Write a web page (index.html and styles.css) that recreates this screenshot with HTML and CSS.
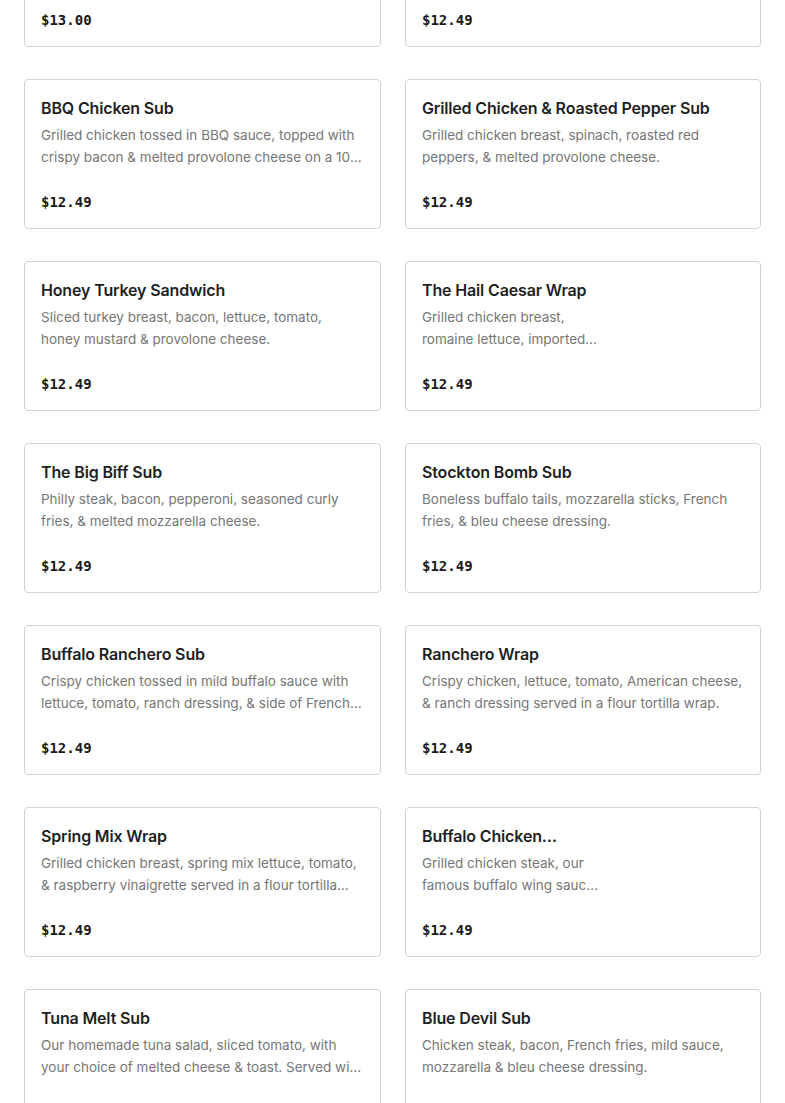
FILE: index.html
```html
<!DOCTYPE html>
<html lang="en">
<head>
<meta charset="utf-8">
<title>Menu</title>
<link rel="stylesheet" href="styles.css">
</head>
<body>
<main class="menu">
  <div class="card"><h3 class="title">Chicken Cheesesteak Sub</h3><p class="desc">Chicken steak, fried onions, lettuce, tomato, mayo &amp; melted American cheese.</p><div class="price">$13.00</div></div>
  <div class="card"><h3 class="title">Cheesesteak Sub</h3><p class="desc">Philly steak, fried onions, lettuce, tomato, mayo &amp; melted American cheese.</p><div class="price">$12.49</div></div>

  <div class="card"><h3 class="title">BBQ Chicken Sub</h3><p class="desc">Grilled chicken tossed in BBQ sauce, topped with crispy bacon &amp; melted provolone cheese on a 10&quot; roll.</p><div class="price">$12.49</div></div>
  <div class="card"><h3 class="title">Grilled Chicken &amp; Roasted Pepper Sub</h3><p class="desc">Grilled chicken breast, spinach, roasted red peppers, &amp; melted provolone cheese.</p><div class="price">$12.49</div></div>

  <div class="card"><h3 class="title">Honey Turkey Sandwich</h3><p class="desc">Sliced turkey breast, bacon, lettuce, tomato, honey mustard &amp; provolone cheese.</p><div class="price">$12.49</div></div>
  <div class="card narrow"><h3 class="title">The Hail Caesar Wrap</h3><p class="desc">Grilled chicken breast, romaine lettuce, imported Parmesan cheese &amp; Caesar dressing.</p><div class="price">$12.49</div></div>

  <div class="card"><h3 class="title">The Big Biff Sub</h3><p class="desc">Philly steak, bacon, pepperoni, seasoned curly fries, &amp; melted mozzarella cheese.</p><div class="price">$12.49</div></div>
  <div class="card"><h3 class="title">Stockton Bomb Sub</h3><p class="desc">Boneless buffalo tails, mozzarella sticks, French fries, &amp; bleu cheese dressing.</p><div class="price">$12.49</div></div>

  <div class="card"><h3 class="title">Buffalo Ranchero Sub</h3><p class="desc">Crispy chicken tossed in mild buffalo sauce with lettuce, tomato, ranch dressing, &amp; side of French fries.</p><div class="price">$12.49</div></div>
  <div class="card"><h3 class="title">Ranchero Wrap</h3><p class="desc">Crispy chicken, lettuce, tomato, American cheese, &amp; ranch dressing served in a flour tortilla wrap.</p><div class="price">$12.49</div></div>

  <div class="card"><h3 class="title">Spring Mix Wrap</h3><p class="desc">Grilled chicken breast, spring mix lettuce, tomato, &amp; raspberry vinaigrette served in a flour tortilla wrap.</p><div class="price">$12.49</div></div>
  <div class="card narrow"><h3 class="title">Buffalo Chicken Cheesesteak</h3><p class="desc">Grilled chicken steak, our famous buffalo wing sauce, &amp; melted provolone.</p><div class="price">$12.49</div></div>

  <div class="card"><h3 class="title">Tuna Melt Sub</h3><p class="desc">Our homemade tuna salad, sliced tomato, with your choice of melted cheese &amp; toast. Served with chips.</p><div class="price">$12.49</div></div>
  <div class="card"><h3 class="title">Blue Devil Sub</h3><p class="desc">Chicken steak, bacon, French fries, mild sauce, mozzarella &amp; bleu cheese dressing.</p><div class="price">$12.49</div></div>
</main>
</body>
</html>
```
FILE: styles.css
```css
html, body {
  margin: 0;
  padding: 0;
  background: #ffffff;
  overflow: hidden;
}
body {
  font-family: Inter, "Noto Sans", "Liberation Sans", sans-serif;
  color: #191919;
}
.menu {
  display: grid;
  grid-template-columns: 357px 356px;
  column-gap: 24px;
  row-gap: 32px;
  padding: 0 24px;
  margin-top: -103px;
}
.card {
  border: 1px solid #d3d3d3;
  border-radius: 4px;
  padding: 16px 16px 14px;
  height: 150px;
  box-sizing: border-box;
  display: flex;
  flex-direction: column;
}
.title {
  margin: 0;
  font-size: 16px;
  font-weight: 600;
  line-height: 24px;
  letter-spacing: -0.15px;
  color: #1f1f1f;
  display: -webkit-box;
  -webkit-box-orient: vertical;
  -webkit-line-clamp: 1;
  overflow: hidden;
  height: 24px;
}
.desc {
  margin: 4px 0 0;
  font-size: 13.5px;
  line-height: 22px;
  color: #767676;
  height: 44px;
  display: -webkit-box;
  -webkit-box-orient: vertical;
  -webkit-line-clamp: 2;
  overflow: hidden;
}
.narrow .title,
.narrow .desc {
  width: 180px;
}
.price {
  margin-top: 22px;
  font-family: "DejaVu Sans Mono", "Liberation Mono", monospace;
  font-weight: bold;
  font-size: 14px;
  line-height: 24px;
  color: #191919;
}
```
